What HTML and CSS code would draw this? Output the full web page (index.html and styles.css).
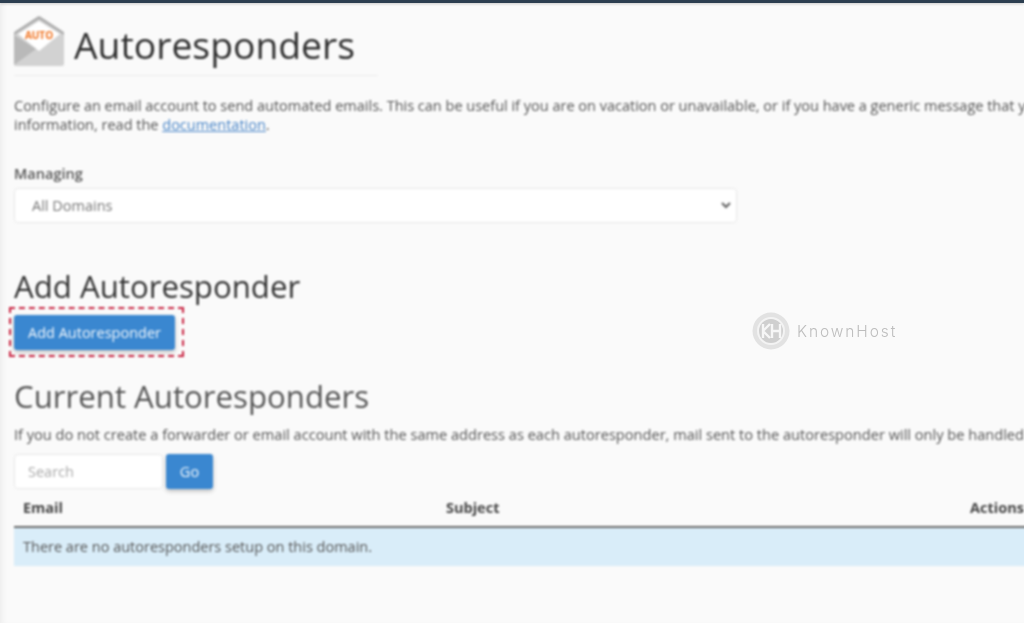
FILE: index.html
```html
<!DOCTYPE html>
<html>
    <head>
        <title>Autoresponders</title>
        <link rel="stylesheet" href="styles.css">
    </head>
    <body>
        <div class="topBar"></div>
        <div class="mainContent">
          <div class="pageHeader">
            <svg class="pageIcon" width="50" height="50" viewBox="0 0 50 50">
              <path d="M0 17 Q0 16 1 15.5 L24 0.5 Q25 0 26 0.5 L49 15.5 Q50 16 50 17 L50 48 Q50 50 48 50 L2 50 Q0 50 0 48 Z" fill="#d2d2d2"/>
              <path d="M0 17 Q0 16 1 15.5 L24 0.5 Q25 0 26 0.5 L49 15.5 Q50 16 50 17 L50 19 L25 3 L0 19 Z" fill="#adadad"/>
              <path d="M4 18 L25 5 L46 18 L25 35 Z" fill="#ffffff"/>
              <path d="M0 19 L22 33 L0 49 Z" fill="#b9b9b9"/>
              <text x="25" y="23" text-anchor="middle" class="iconText">AUTO</text>
            </svg>
            <h1 class="pageTitle">Autoresponders</h1>
          </div>
          <p class="intro">Configure an email account to send automated emails. This can be useful if you are on vacation or unavailable, or if you have a generic message that you send to several accounts. For more<br>information, read the <a href="#">documentation</a>.</p>
          <label class="fieldLabel">Managing</label>
          <div class="selectBox">
            <span>All Domains</span>
            <svg width="10" height="7" viewBox="0 0 10 7"><path d="M1 1 L5 5 L9 1" fill="none" stroke="#666" stroke-width="2.2"/></svg>
          </div>
          <h2 class="addTitle">Add Autoresponder</h2>
          <div class="highlightBox">
            <button class="btn addBtn">Add Autoresponder</button>
          </div>
          <h2 class="currentTitle">Current Autoresponders</h2>
          <p class="note">If you do not create a forwarder or email account with the same address as each autoresponder, mail sent to the autoresponder will only be handled by the autoresponder.</p>
          <div class="searchRow">
            <div class="searchInput">Search</div>
            <button class="btn goBtn">Go</button>
          </div>
          <div class="tableHead">
            <span class="colEmail">Email</span>
            <span class="colSubject">Subject</span>
            <span>Actions</span>
          </div>
          <div class="emptyRow">There are no autoresponders setup on this domain.</div>
        </div>
        <div class="watermark">
          <svg width="38" height="38" viewBox="0 0 38 38">
            <circle cx="19" cy="19" r="18.5" fill="#e2e2e2"/>
            <circle cx="19" cy="19" r="13" fill="#cfcfcf" stroke="#f3f3f3" stroke-width="2"/>
            <path d="M11 12 V26 M11 19 L18 12 M11 19 L18 26 M20 12 V26 M28 12 V26 M20 19 H28" fill="none" stroke="#f6f6f6" stroke-width="2.4"/>
          </svg>
          <span>KnownHost</span>
        </div>
    </body>
</html>
```

FILE: styles.css
```css
html, body{
  height: 100%;
}
body{
  margin: 0;
  background-color: #fafafa;
  color: #333;
  font-family: "Open Sans", sans-serif;
  overflow: hidden;
  position: relative;
  box-shadow: inset 6px 0 6px -4px rgba(0,0,0,0.06);
}
.topBar{
  height: 3px;
  background-color: #2c3e50;
  box-shadow: 0 1px 3px rgba(0,0,0,0.2);
}
.mainContent{
  width: 1200px;
  padding: 13px 0 0 14px;
  filter: blur(0.8px);
}
.pageHeader{
  display: flex;
  align-items: center;
  gap: 10px;
  width: 364px;
  height: 58px;
  padding-bottom: 1px;
  border-bottom: 1px solid #eee;
}
.pageIcon{
  flex: none;
  margin-top: -9px;
}
.iconText{
  font-family: "Open Sans", sans-serif;
  font-size: 10px;
  font-weight: 700;
  fill: #f0711e;
}
.pageTitle{
  margin: 0;
  font-size: 37.3px;
  font-weight: 400;
  line-height: 50px;
  color: #2f2f2f;
}
.intro{
  margin: 20px 0 0;
  font-size: 14.5px;
  line-height: 19px;
  color: #555;
  white-space: nowrap;
}
.intro a{
  color: #4a86c8;
  text-decoration: underline;
}
.fieldLabel{
  display: block;
  margin-top: 30px;
  font-size: 14.5px;
  font-weight: 600;
  line-height: 19px;
  color: #555;
}
.selectBox{
  display: flex;
  align-items: center;
  justify-content: space-between;
  box-sizing: border-box;
  width: 723px;
  height: 35px;
  margin-top: 5px;
  padding: 0 5px 0 17px;
  background-color: #fff;
  border: 1px solid #e8e8e8;
  border-radius: 4px;
  font-size: 14.5px;
  color: #777;
}
.addTitle{
  margin: 43px 0 0;
  font-size: 31.2px;
  font-weight: 400;
  line-height: 41px;
  color: #333;
}
.highlightBox{
  display: inline-block;
  margin: 0 0 0 -5px;
  padding: 6px 7px 5px 3px;
  border: 2px dashed #c8213f;
}
.btn{
  display: block;
  border: 0;
  border-radius: 3px;
  background-color: #3a87d0;
  color: #f2f7fc;
  font-family: "Open Sans", sans-serif;
  font-size: 14.5px;
  box-shadow: 0 2px 4px rgba(0,0,0,0.25);
}
.addBtn{
  width: 161px;
  height: 35px;
  padding: 0;
}
.currentTitle{
  margin: 19px 0 0;
  font-size: 31.2px;
  font-weight: 400;
  line-height: 41px;
  color: #555;
}
.note{
  margin: 8px 0 0;
  font-size: 14.6px;
  line-height: 19px;
  color: #555;
  white-space: nowrap;
}
.searchRow{
  display: flex;
  gap: 3px;
  margin-top: 10px;
}
.searchInput{
  box-sizing: border-box;
  width: 149px;
  height: 35px;
  padding: 0 13px;
  background-color: #fff;
  border: 1px solid #e8e8e8;
  border-radius: 4px;
  font-size: 14.5px;
  line-height: 33px;
  color: #aaa;
}
.goBtn{
  width: 47px;
  height: 35px;
  padding: 0;
}
.tableHead{
  display: flex;
  box-sizing: border-box;
  width: 1186px;
  height: 39px;
  padding: 9px 9px 0;
  border-bottom: 2px solid #6a6a6a;
  font-size: 14.5px;
  font-weight: 700;
  line-height: 19px;
  color: #444;
}
.colEmail{
  width: 423px;
}
.colSubject{
  width: 524px;
}
.emptyRow{
  box-sizing: border-box;
  width: 1186px;
  height: 38px;
  padding: 0 9px;
  background-color: #d9edf9;
  font-size: 14.5px;
  line-height: 38px;
  color: #555;
}
.watermark{
  position: absolute;
  left: 752px;
  top: 312px;
  display: flex;
  align-items: center;
  gap: 7px;
  font-family: "Inter", sans-serif;
  font-size: 15.5px;
  letter-spacing: 1.9px;
  font-weight: 300;
  color: #bdbdbd;
  filter: blur(0.5px);
}
```
